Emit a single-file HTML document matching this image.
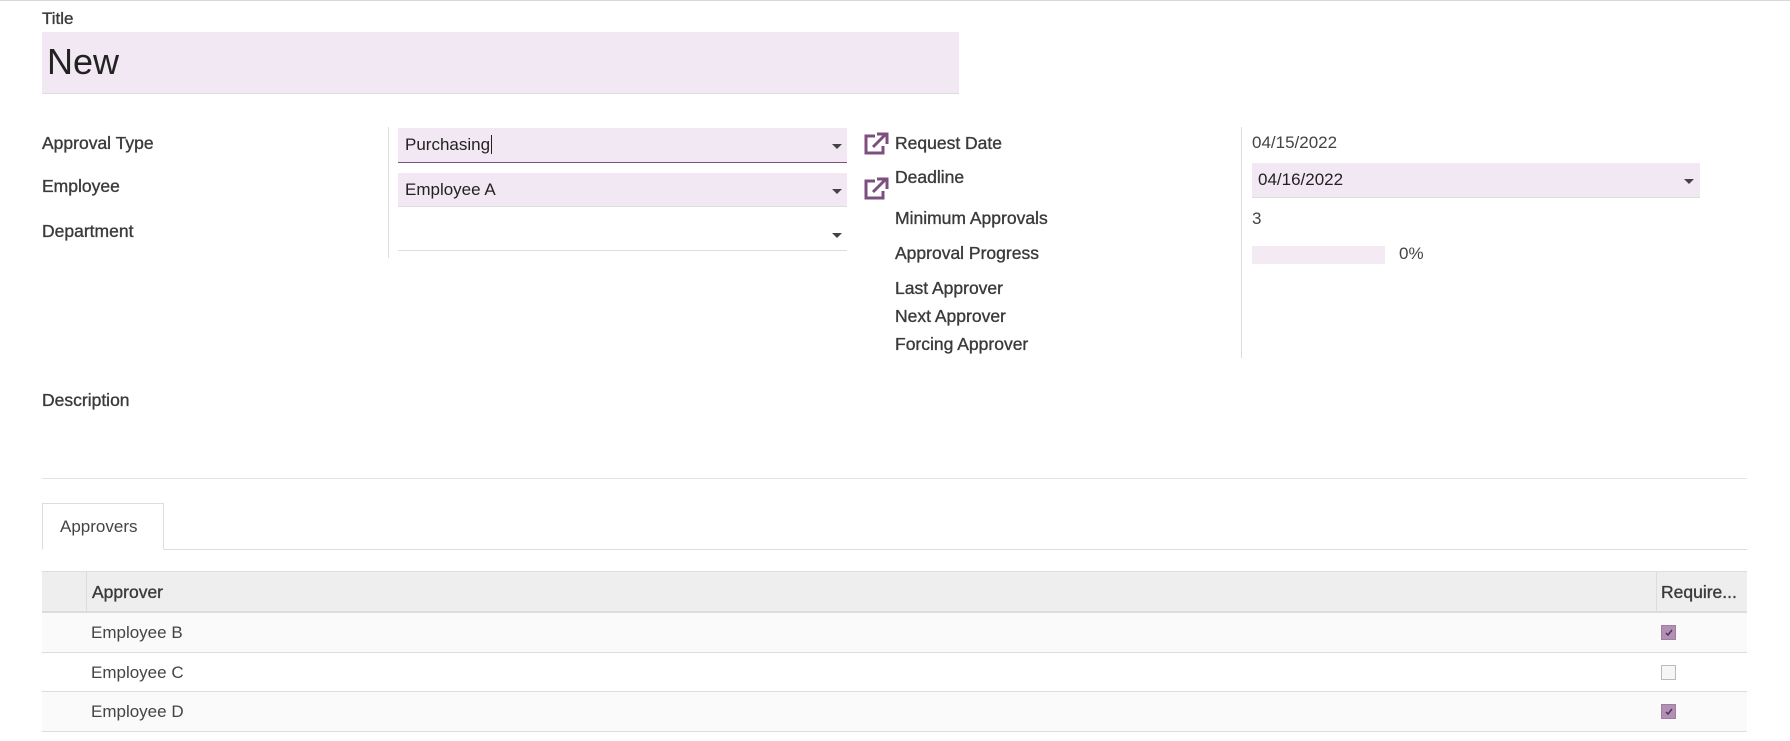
<!DOCTYPE html>
<html><head><meta charset="utf-8"><style>
*{box-sizing:border-box;margin:0;padding:0}
body{width:1790px;height:741px;background:#fff;font-family:"Liberation Sans",sans-serif;color:#4c4c4c;position:relative;overflow:hidden;border-top:1px solid #d8d8d8}
.a{position:absolute;white-space:nowrap}
.lbl{font-size:17.5px;color:#3a3a3a;-webkit-text-stroke:0.35px #3a3a3a}
.val{font-size:17px;color:#444}
.inp{position:absolute;background:#f2e8f3;border-bottom:1px solid #ddd}
.caret{position:absolute;width:0;height:0;border-left:5px solid transparent;border-right:5px solid transparent;border-top:5px solid #444}
.vl{position:absolute;width:1px;background:#ddd}
.cb{position:absolute;width:15px;height:15px;border:1px solid #bbb;background:#f6f6f6}
.cb.on{background:#b191b3;border-color:#a07ea3}
</style></head><body>
<div class="a lbl" style="left:42px;top:8px;font-size:17px">Title</div>
<div class="inp" style="left:42px;top:31px;width:917px;height:62px"></div>
<div class="a" style="left:47px;top:40px;font-size:36px;color:#222">New</div>

<div class="a lbl" style="left:42px;top:132px">Approval Type</div>
<div class="a lbl" style="left:42px;top:175px">Employee</div>
<div class="a lbl" style="left:42px;top:220px">Department</div>
<div class="vl" style="left:388px;top:126px;height:131px"></div>

<div class="inp" style="left:398px;top:127px;width:449px;height:35px;border-bottom:1.5px solid #7c4f7f"></div>
<div class="a val" style="left:405px;top:134px;color:#222">Purchasing<span style="border-left:1px solid #222;margin-left:1px"></span></div>
<div class="caret" style="left:832px;top:143px"></div>
<div class="inp" style="left:398px;top:172px;width:449px;height:34px"></div>
<div class="a val" style="left:405px;top:179px;color:#222">Employee A</div>
<div class="caret" style="left:832px;top:188px"></div>
<div style="position:absolute;left:398px;top:249px;width:449px;height:1px;background:#ddd"></div>
<div class="caret" style="left:832px;top:232px"></div>

<svg class="a" style="left:862px;top:131px" width="28" height="24" viewBox="0 0 28 24"><path d="M13 4H4v17h17v-7" fill="none" stroke="#7c4f7f" stroke-width="3"/><path d="M11 15L23 3M15 2h10v10" fill="none" stroke="#7c4f7f" stroke-width="3"/></svg>
<svg class="a" style="left:862px;top:176px" width="28" height="24" viewBox="0 0 28 24"><path d="M13 4H4v17h17v-7" fill="none" stroke="#7c4f7f" stroke-width="3"/><path d="M11 15L23 3M15 2h10v10" fill="none" stroke="#7c4f7f" stroke-width="3"/></svg>

<div class="a lbl" style="left:895px;top:132px">Request Date</div>
<div class="a lbl" style="left:895px;top:166px">Deadline</div>
<div class="a lbl" style="left:895px;top:207px">Minimum Approvals</div>
<div class="a lbl" style="left:895px;top:242px">Approval Progress</div>
<div class="a lbl" style="left:895px;top:277px">Last Approver</div>
<div class="a lbl" style="left:895px;top:305px">Next Approver</div>
<div class="a lbl" style="left:895px;top:333px">Forcing Approver</div>
<div class="vl" style="left:1241px;top:126px;height:231px"></div>

<div class="a val" style="left:1252px;top:132px">04/15/2022</div>
<div class="inp" style="left:1252px;top:162px;width:448px;height:35px"></div>
<div class="a val" style="left:1258px;top:169px;color:#222">04/16/2022</div>
<div class="caret" style="left:1684px;top:178px"></div>
<div class="a val" style="left:1252px;top:208px">3</div>
<div style="position:absolute;left:1252px;top:245px;width:133px;height:18px;background:#f4eaf4"></div>
<div class="a val" style="left:1399px;top:243px">0%</div>

<div class="a lbl" style="left:42px;top:389px">Description</div>
<div style="position:absolute;left:42px;top:477px;width:1705px;height:1px;background:#e4e4e4"></div>

<div style="position:absolute;left:42px;top:548px;width:1705px;height:1px;background:#ddd"></div>
<div style="position:absolute;left:42px;top:502px;width:122px;height:47px;border:1px solid #ddd;border-bottom:1px solid #fff;background:#fff"></div>
<div class="a" style="left:60px;top:516px;font-size:17px;color:#444">Approvers</div>

<div style="position:absolute;left:42px;top:570px;width:1705px;height:42px;background:#eee;border-top:1px solid #ddd;border-bottom:2px solid #dcdcdc"></div>
<div class="vl" style="left:86px;top:571px;height:39px;background:#ddd"></div>
<div class="vl" style="left:1656px;top:571px;height:39px;background:#ddd"></div>
<div class="a lbl" style="left:92px;top:581px">Approver</div>
<div class="a lbl" style="left:1661px;top:581px">Require...</div>

<div style="position:absolute;left:42px;top:612px;width:1705px;height:40px;background:#fafafa;border-bottom:1px solid #ddd"></div>
<div style="position:absolute;left:42px;top:652px;width:1705px;height:39px;background:#fff;border-bottom:1px solid #ddd"></div>
<div style="position:absolute;left:42px;top:691px;width:1705px;height:40px;background:#fafafa;border-bottom:1px solid #ddd"></div>
<div class="a val" style="left:91px;top:622px">Employee B</div>
<div class="a val" style="left:91px;top:662px">Employee C</div>
<div class="a val" style="left:91px;top:701px">Employee D</div>
<div class="cb on" style="left:1661px;top:624px"><svg width="13" height="13" style="position:absolute;left:0;top:0"><path d="M4 7l2 2 4-5" fill="none" stroke="#5a2d5e" stroke-width="1.5"/></svg></div>
<div class="cb" style="left:1661px;top:664px"></div>
<div class="cb on" style="left:1661px;top:703px"><svg width="13" height="13" style="position:absolute;left:0;top:0"><path d="M4 7l2 2 4-5" fill="none" stroke="#5a2d5e" stroke-width="1.5"/></svg></div>
</body></html>
